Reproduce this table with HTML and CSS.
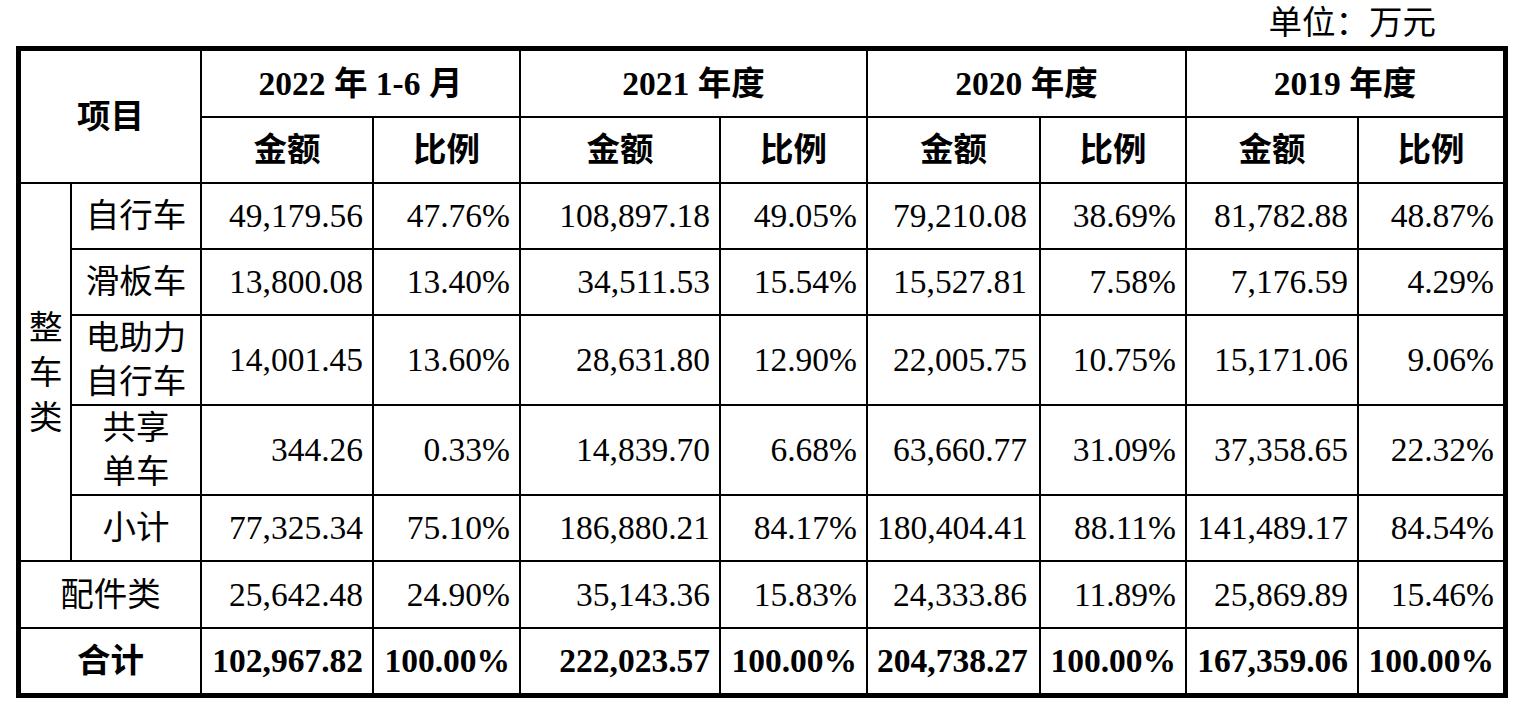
FILE: index.html
```html
<!DOCTYPE html>
<html lang="zh-CN">
<head>
<meta charset="utf-8">
<title>收入构成</title>
<link rel="stylesheet" href="styles.css">
</head>
<body>
<div class="page">
  <div class="unit">单位：万元</div>
  <table class="grid">
    <colgroup>
      <col class="c-cat">
      <col class="c-name">
      <col class="c-amt1">
      <col class="c-pct1">
      <col class="c-amt2">
      <col class="c-pct2">
      <col class="c-amt3">
      <col class="c-pct3">
      <col class="c-amt4">
      <col class="c-pct4">
    </colgroup>
    <tr class="r-head1">
      <th colspan="2" rowspan="2">项目</th>
      <th colspan="2">2022 年 1-6 月</th>
      <th colspan="2">2021 年度</th>
      <th colspan="2">2020 年度</th>
      <th colspan="2">2019 年度</th>
    </tr>
    <tr class="r-head2">
      <th>金额</th><th>比例</th>
      <th>金额</th><th>比例</th>
      <th>金额</th><th>比例</th>
      <th>金额</th><th>比例</th>
    </tr>
    <tr class="r-std">
      <td rowspan="5" class="cat">整车类</td>
      <td class="name">自行车</td>
      <td class="num">49,179.56</td><td class="num">47.76%</td>
      <td class="num">108,897.18</td><td class="num">49.05%</td>
      <td class="num wide">79,210.08</td><td class="num">38.69%</td>
      <td class="num">81,782.88</td><td class="num">48.87%</td>
    </tr>
    <tr class="r-std">
      <td class="name">滑板车</td>
      <td class="num">13,800.08</td><td class="num">13.40%</td>
      <td class="num">34,511.53</td><td class="num">15.54%</td>
      <td class="num wide">15,527.81</td><td class="num">7.58%</td>
      <td class="num">7,176.59</td><td class="num">4.29%</td>
    </tr>
    <tr class="r-tall">
      <td class="name">电助力<br>自行车</td>
      <td class="num">14,001.45</td><td class="num">13.60%</td>
      <td class="num">28,631.80</td><td class="num">12.90%</td>
      <td class="num wide">22,005.75</td><td class="num">10.75%</td>
      <td class="num">15,171.06</td><td class="num">9.06%</td>
    </tr>
    <tr class="r-tall">
      <td class="name">共享<br>单车</td>
      <td class="num">344.26</td><td class="num">0.33%</td>
      <td class="num">14,839.70</td><td class="num">6.68%</td>
      <td class="num wide">63,660.77</td><td class="num">31.09%</td>
      <td class="num">37,358.65</td><td class="num">22.32%</td>
    </tr>
    <tr class="r-std">
      <td class="name">小计</td>
      <td class="num">77,325.34</td><td class="num">75.10%</td>
      <td class="num">186,880.21</td><td class="num">84.17%</td>
      <td class="num wide">180,404.41</td><td class="num">88.11%</td>
      <td class="num">141,489.17</td><td class="num">84.54%</td>
    </tr>
    <tr class="r-std2">
      <td colspan="2" class="name">配件类</td>
      <td class="num">25,642.48</td><td class="num">24.90%</td>
      <td class="num">35,143.36</td><td class="num">15.83%</td>
      <td class="num wide">24,333.86</td><td class="num">11.89%</td>
      <td class="num">25,869.89</td><td class="num">15.46%</td>
    </tr>
    <tr class="r-total">
      <td colspan="2" class="name">合计</td>
      <td class="num">102,967.82</td><td class="num">100.00%</td>
      <td class="num">222,023.57</td><td class="num">100.00%</td>
      <td class="num wide">204,738.27</td><td class="num">100.00%</td>
      <td class="num">167,359.06</td><td class="num">100.00%</td>
    </tr>
  </table>
</div>
</body>
</html>
```

FILE: styles.css
```css
html, body {
  margin: 0;
  padding: 0;
  background: #ffffff;
}

body {
  font-family: "Liberation Serif", "Noto Sans CJK SC", serif;
  color: #000000;
}

.page {
  width: 1492px;
  padding-left: 16px;
}

.unit {
  height: 46px;
  line-height: 46px;
  font-size: 33.5px;
  text-align: right;
  padding-right: 72px;
}

.grid {
  border-collapse: collapse;
  table-layout: fixed;
  width: 1492px;
  border: 5px solid #000000;
  font-size: 33.5px;
  line-height: 44px;
}

.grid th,
.grid td {
  border: 2px solid #000000;
  padding: 0 9px;
  vertical-align: middle;
  text-align: center;
  white-space: nowrap;
}

.grid th {
  font-weight: 700;
}

.c-cat { width: 52.5px; }
.c-name { width: 130px; }
.c-amt1 { width: 172px; }
.c-pct1 { width: 147px; }
.c-amt2 { width: 200px; }
.c-pct2 { width: 147px; }
.c-amt3 { width: 173px; }
.c-pct3 { width: 146px; }
.c-amt4 { width: 172px; }
.c-pct4 { width: 147.5px; }

.r-head1 { height: 68.5px; }
.r-head2 { height: 66px; }
.r-std { height: 66px; }
.r-tall { height: 90px; }
.r-std2 { height: 67px; }
.r-total { height: 67.5px; }

.grid td.cat {
  white-space: normal;
  padding: 0 8px;
  line-height: 45px;
}

.grid td.num {
  text-align: right;
}

.grid td.num.wide {
  padding-right: 12px;
}

.r-total td {
  font-weight: 700;
}
```
